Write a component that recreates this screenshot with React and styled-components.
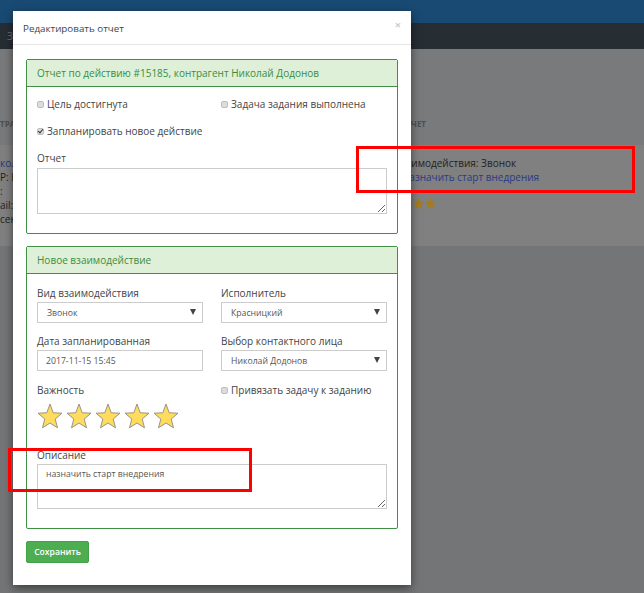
import styled, { createGlobalStyle } from "styled-components";

const Global = createGlobalStyle`
  html, body { margin: 0; padding: 0; height: 100%; }
  body { font-family: "Open Sans", "Noto Sans", sans-serif; background: #747576; overflow: hidden; }
`;

// page behind the dialog
const Page = styled.div`
  position: relative;
  height: 593px;
  overflow: hidden;
  display: flex;
  flex-direction: column;
`;
const TopBar = styled.div`
  height: 23px;
  background: #194a73;
`;
const NavBar = styled.div`
  height: 26px;
  background: #262d33;
  color: #6d7276;
  font-size: 10px;
  line-height: 26px;
  padding-left: 7px;
`;
const TableHead = styled.div`
  height: 96px;
  box-sizing: border-box;
  background: #797a7b;
  display: flex;
  justify-content: space-between;
  align-items: flex-end;
  padding: 0 218px 16px 0;
  font-size: 8px;
  font-weight: 700;
  color: #4e5051;
`;
const TableRow = styled.div`
  height: 101px;
  box-sizing: border-box;
  background: #808080;
  display: flex;
  justify-content: space-between;
  padding: 11px 0 0;
  font-size: 10px;
  line-height: 14px;
  color: #222;
`;
const LeftCell = styled.div`
  width: 20px;
  overflow: hidden;
  white-space: nowrap;
  & > div:nth-child(1) { color: #24377f; }
`;
const RightCell = styled.div`
  width: 270px;
  white-space: nowrap;
  box-sizing: border-box;
`;
const CellLink = styled.div`
  color: #2a3a86;
  margin-left: 29px;
`;
const SmallStars = styled.div`
  display: flex;
  gap: 1px;
  margin: 14px 0 0 39px;
`;
const Rest = styled.div`
  flex: 1;
  background: #747576;
`;

// dialog
const Modal = styled.div`
  position: absolute;
  left: 13px;
  top: 11px;
  width: 398px;
  height: 574px;
  background: #fff;
  box-shadow: 0 3px 9px rgba(0, 0, 0, 0.5);
  box-sizing: border-box;
`;
const ModalHeader = styled.div`
  height: 34px;
  box-sizing: border-box;
  border-bottom: 1px solid #e5e5e5;
  display: flex;
  justify-content: space-between;
  align-items: center;
  padding: 1px 10px 0;
  font-size: 9.8px;
  color: #444;
`;
const Close = styled.span`
  font-size: 11px;
  font-weight: 700;
  color: #ccc;
  margin-top: -7px;
`;
const ModalBody = styled.div`
  padding: 14px 13px 0;
  display: flex;
  flex-direction: column;
  gap: 12px;
`;
const Panel = styled.div`
  border: 1px solid #3f8f44;
  border-radius: 2px;
  height: ${(p) => p.$h}px;
  box-sizing: border-box;
`;
const PanelHeading = styled.div`
  height: 27px;
  box-sizing: border-box;
  background: #dff0d8;
  border-bottom: 1px solid #3f8f44;
  color: #3c8c42;
  font-size: 10px;
  line-height: 27px;
  padding-left: 10px;
`;
const PanelBody = styled.div`
  padding: ${(p) => p.$top || 10}px 10px 0;
`;
const Grid = styled.div`
  display: grid;
  grid-template-columns: 166px 166px;
  column-gap: 18px;
  row-gap: ${(p) => p.$gap || 0}px;
`;
const CheckLabel = styled.label`
  display: flex;
  align-items: center;
  gap: 3px;
  height: 14px;
  margin-top: ${(p) => p.$top || 0}px;
  font-size: 10px;
  color: #444;
  white-space: nowrap;
`;
const Check = styled.input.attrs({ type: "checkbox", readOnly: true })`
  appearance: none;
  width: 7px;
  height: 7px;
  margin: 0;
  border: 1px solid #bdbdbd;
  border-radius: 2px;
  background: #dcdcdc;
  position: relative;
  &:checked::after {
    content: "";
    position: absolute;
    left: 1px;
    top: -1px;
    width: 2px;
    height: 4px;
    border: solid #333;
    border-width: 0 1.5px 1.5px 0;
    transform: rotate(40deg);
  }
`;
const Field = styled.div`
  display: flex;
  flex-direction: column;
  margin-top: ${(p) => p.$top || 0}px;
`;
const Label = styled.div`
  font-size: 10px;
  line-height: 14px;
  color: #444;
  margin-bottom: ${(p) => p.$mb ?? 2}px;
`;
const Area = styled.textarea`
  display: block;
  width: 350px;
  height: ${(p) => p.$h}px;
  box-sizing: border-box;
  border: 1px solid #ccc;
  padding: 2px 8px;
  font-family: inherit;
  font-size: 8.7px;
  line-height: 14px;
  color: #555;
  outline: none;
  border-radius: 0;
`;
const Input = styled.input`
  width: 166px;
  height: 21px;
  box-sizing: border-box;
  border: 1px solid #ccc;
  padding: 0 8px;
  font-family: inherit;
  font-size: 8.7px;
  color: #555;
  outline: none;
`;
const SelectWrap = styled.div`
  position: relative;
  width: 166px;
  height: 21px;
  &::after {
    content: "";
    position: absolute;
    right: 7px;
    top: 7px;
    border-left: 3px solid transparent;
    border-right: 3px solid transparent;
    border-top: 6px solid #444;
  }
`;
const Select = styled.select`
  appearance: none;
  display: block;
  width: 100%;
  height: 100%;
  box-sizing: border-box;
  border: 1px solid #ccc;
  border-radius: 0;
  background: #fff;
  padding: 0 9px;
  font-family: inherit;
  font-size: 8.7px;
  color: #555;
  outline: none;
`;
const Stars = styled.div`
  display: flex;
  gap: 3px;
  margin-top: 4px;
`;
const Spacer = styled.div`
  height: ${(p) => p.$h}px;
`;
const SaveButton = styled.button`
  display: block;
  width: 63px;
  height: 22px;
  padding: 0;
  border: 1px solid #46a04a;
  border-radius: 2px;
  background: #4cae50;
  color: #fff;
  font-family: inherit;
  font-size: 8.6px;
  font-weight: 600;
`;
// red marks drawn over the screenshot
const Mark = styled.div`
  position: absolute;
  left: ${(p) => p.$x}px;
  top: ${(p) => p.$y}px;
  width: ${(p) => p.$w}px;
  height: ${(p) => p.$h}px;
  box-sizing: border-box;
  border: 3px solid #ff0000;
`;

function Star({ size = 26, fill = "#ffdc5e", stroke = "#999488" }) {
  return (
    <svg width={size} height={size} viewBox="0 0 26 26">
      <polygon
        points="13,1 16.2,9.8 25,10.2 18.2,16 20.5,24.8 13,20 5.5,24.8 7.8,16 1,10.2 9.8,9.8"
        fill={fill}
        stroke={stroke}
        strokeWidth="1"
      />
    </svg>
  );
}

function Dropdown({ value }) {
  return (
    <SelectWrap>
      <Select defaultValue={value}>
        <option>{value}</option>
      </Select>
    </SelectWrap>
  );
}

export default function App() {
  return (
    <Page>
      <Global />
      <TopBar />
      <NavBar>З</NavBar>
      <TableHead>
        <span>ТРА</span>
        <span>ОТЧЕТ</span>
      </TableHead>
      <TableRow>
        <LeftCell>
          <div>кол</div>
          <div>P: Н</div>
          <div>:</div>
          <div>ail:</div>
          <div>сен</div>
        </LeftCell>
        <RightCell>
          <div>Вид взаимодействия: Звонок</div>
          <CellLink>назначить старт внедрения</CellLink>
          <SmallStars>
            <Star size={11} fill="#a67c1a" stroke="#a67c1a" />
            <Star size={11} fill="#a67c1a" stroke="#a67c1a" />
          </SmallStars>
        </RightCell>
      </TableRow>
      <Rest />

      <Modal>
        <ModalHeader>
          <span>Редактировать отчет</span>
          <Close>×</Close>
        </ModalHeader>
        <ModalBody>
          <Panel $h={175}>
            <PanelHeading>Отчет по действию #15185, контрагент Николай Додонов</PanelHeading>
            <PanelBody>
              <Grid $gap={13}>
                <CheckLabel><Check />Цель достигнута</CheckLabel>
                <CheckLabel><Check />Задача задания выполнена</CheckLabel>
                <CheckLabel><Check defaultChecked />Запланировать новое действие</CheckLabel>
              </Grid>
              <Field $top={13}>
                <Label $mb={3}>Отчет</Label>
                <Area $h={46} readOnly />
              </Field>
            </PanelBody>
          </Panel>
          <Panel $h={283}>
            <PanelHeading>Новое взаимодействие</PanelHeading>
            <PanelBody $top={12}>
              <Grid $gap={11}>
                <Field>
                  <Label>Вид взаимодействия</Label>
                  <Dropdown value="Звонок" />
                </Field>
                <Field>
                  <Label>Исполнитель</Label>
                  <Dropdown value="Красницкий" />
                </Field>
                <Field>
                  <Label>Дата запланированная</Label>
                  <Input readOnly defaultValue="2017-11-15 15:45" />
                </Field>
                <Field>
                  <Label>Выбор контактного лица</Label>
                  <Dropdown value="Николай Додонов" />
                </Field>
                <Field $top={1}>
                  <Label>Важность</Label>
                  <Stars>
                    <Star /><Star /><Star /><Star /><Star />
                  </Stars>
                </Field>
                <CheckLabel $top={1}><Check />Привязать задачу к заданию</CheckLabel>
              </Grid>
              <Spacer $h={19} />
              <Label $mb={2}>Описание</Label>
              <Area $h={45} readOnly defaultValue="назначить старт внедрения" />
            </PanelBody>
          </Panel>
          <SaveButton>Сохранить</SaveButton>
        </ModalBody>
      </Modal>

      <Mark $x={356} $y={146} $w={279} $h={47} />
      <Mark $x={8} $y={448} $w={244} $h={44} />
    </Page>
  );
}
